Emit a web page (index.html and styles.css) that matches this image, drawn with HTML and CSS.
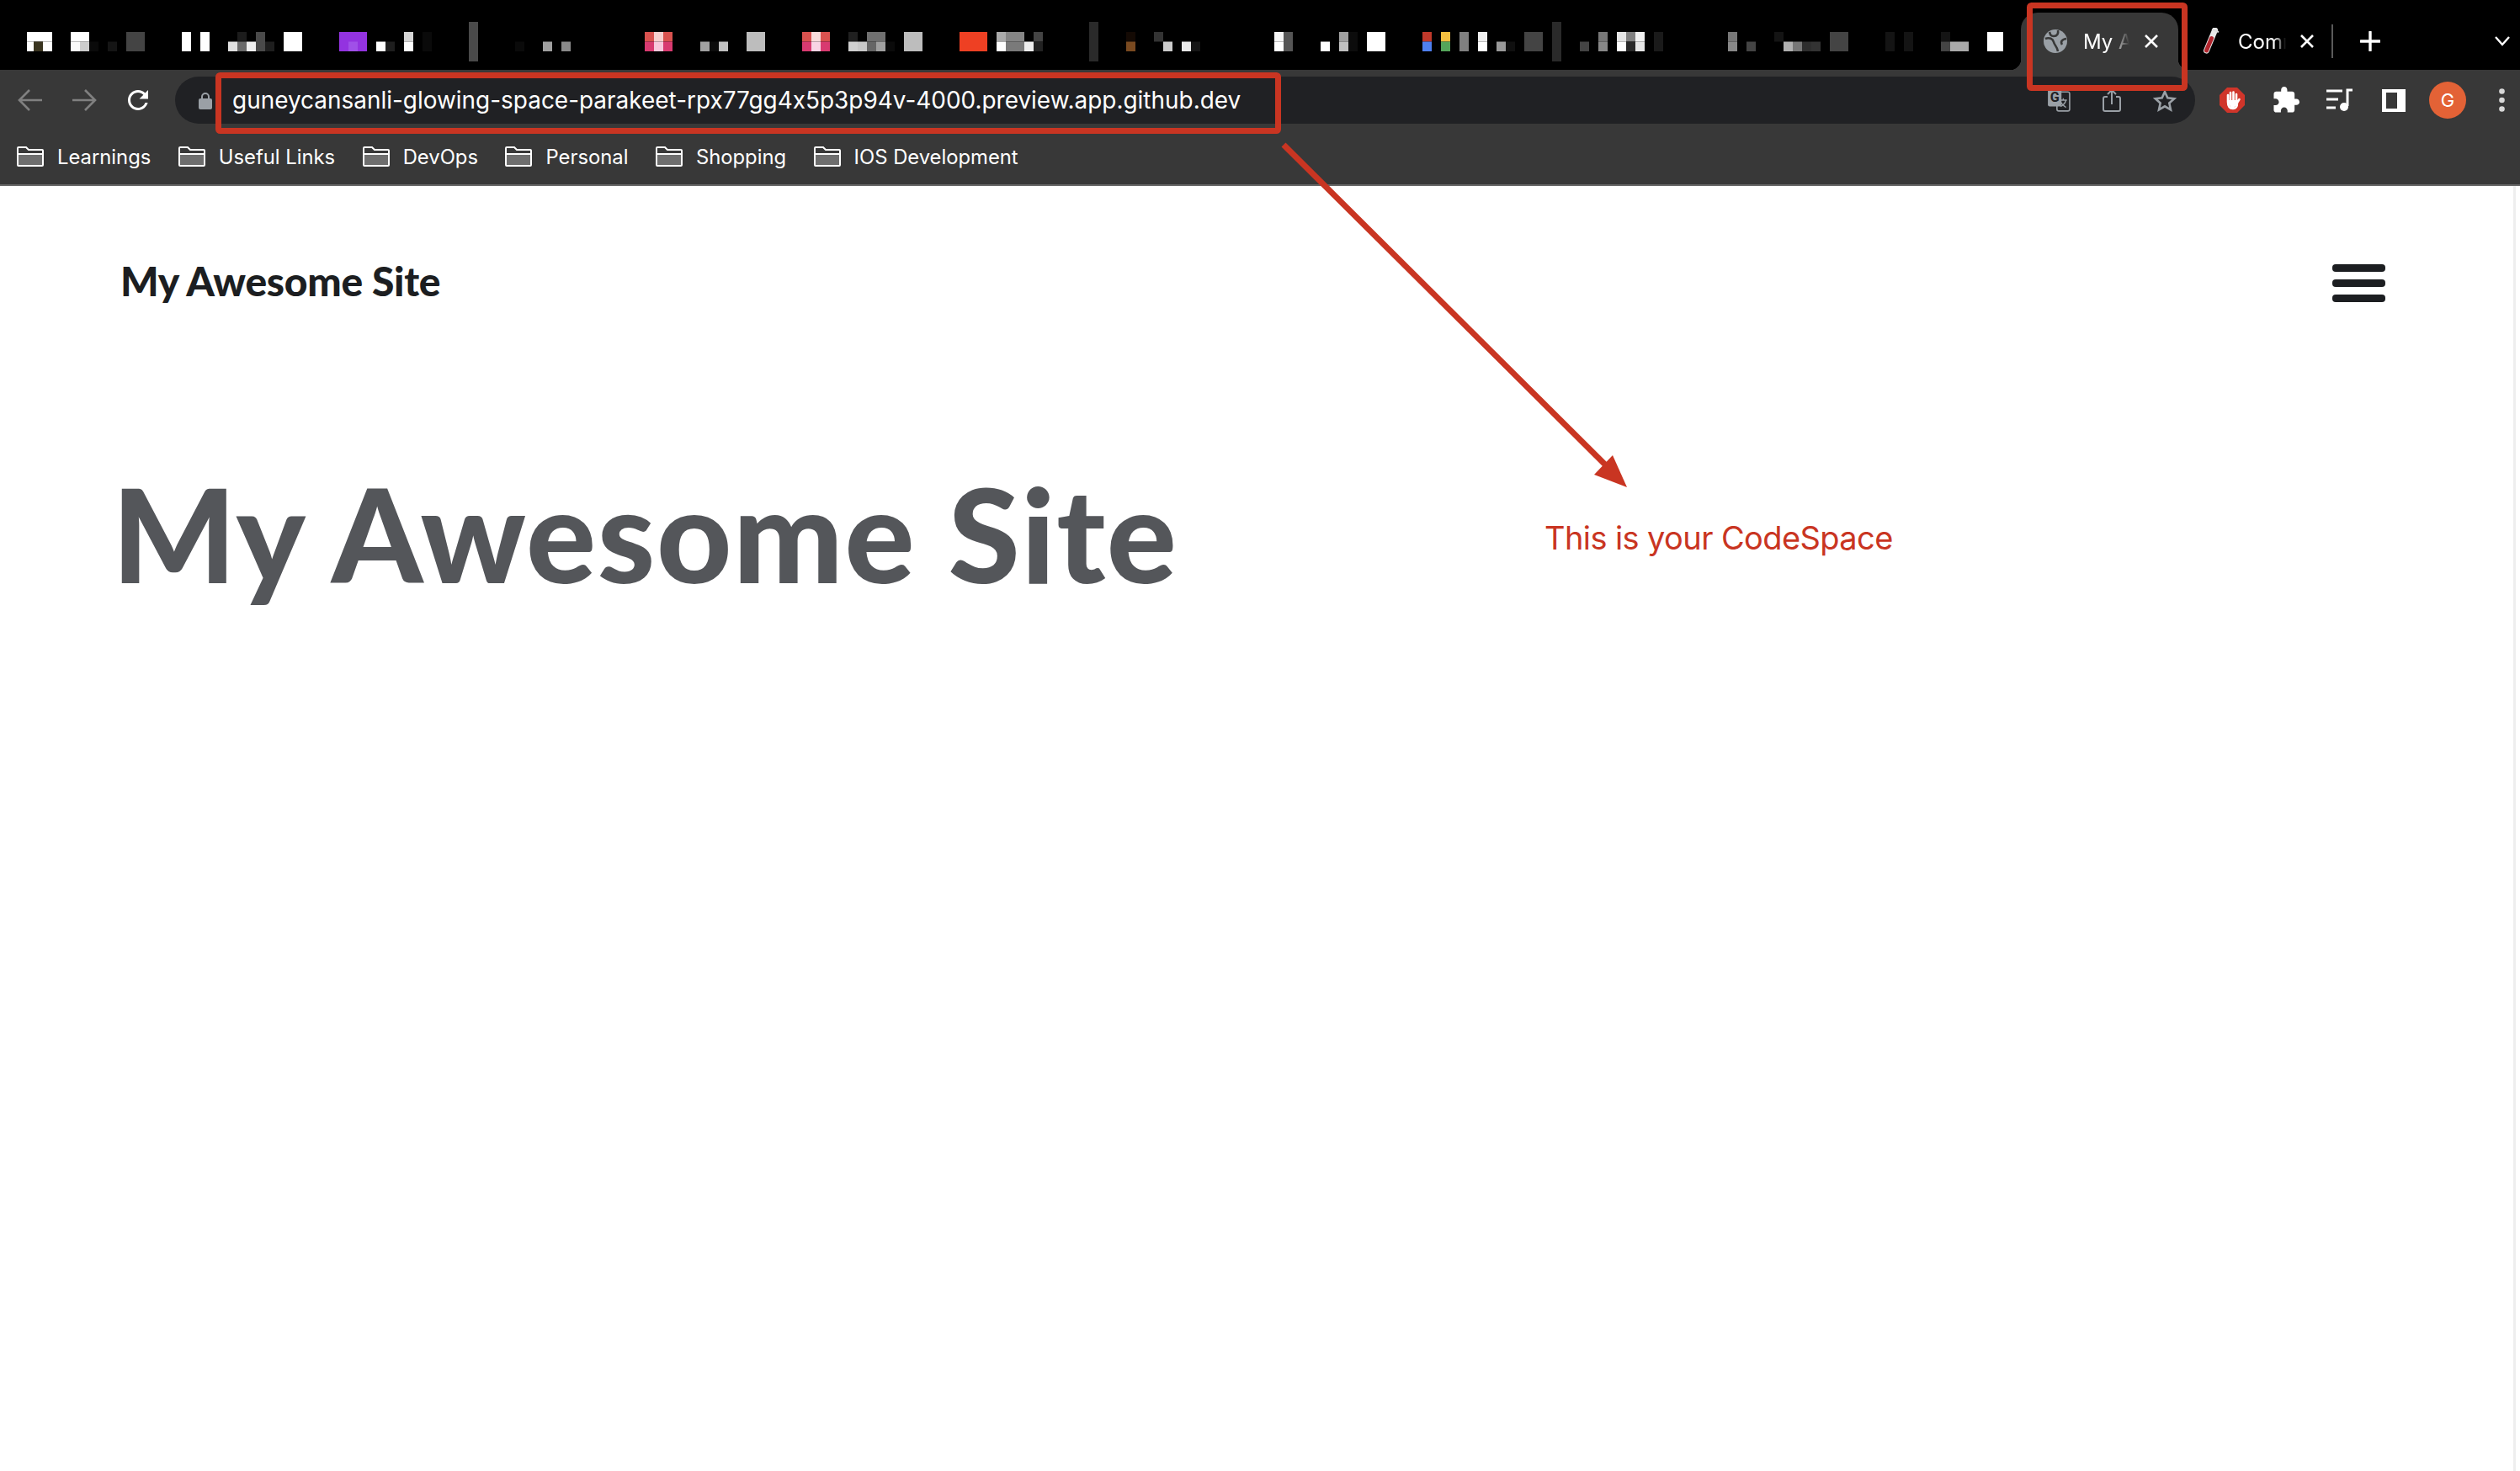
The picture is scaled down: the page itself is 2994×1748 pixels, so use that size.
FILE: index.html
```html
<!DOCTYPE html>
<html lang="en">
<head>
    <meta charset="UTF-8">
    <title>My Awesome Site</title>
    <link rel="stylesheet" href="styles.css">
</head>
<body>
<div class="browser">
    <!-- tab strip, the tabs on the left are pixelated -->
    <div class="tabstrip">
        <svg class="mosaic" width="2401" height="83" viewBox="0 0 2401 83">
            <rect class="top" x="32" width="30" fill="#fff"/><rect class="bot" x="32" width="8" fill="#fff"/><rect class="bot" x="40" width="11" fill="#3a3520"/><rect class="bot" x="51" width="11" fill="#fff"/>
            <rect class="top" x="84" width="22" fill="#fff"/><rect class="bot" x="84" width="11" fill="#fafafa"/><rect class="bot" x="95" width="11" fill="#ccc"/><rect class="bot" x="106" width="11" fill="#0a0a0a"/><rect class="bot" x="128" width="11" fill="#151515"/><rect class="full" x="150" width="22" fill="#444"/>
            <rect class="full" x="216" width="11" fill="#fff"/><rect class="full" x="238" width="11" fill="#fff"/><rect class="bot" x="271" width="11" fill="#e0e0e0"/><rect class="top" x="282" width="11" fill="#1c1c1c"/><rect class="bot" x="282" width="11" fill="#6a6a6a"/><rect class="bot" x="293" width="11" fill="#f0f0f0"/><rect class="full" x="304" width="11" fill="#4a4a4a"/><rect class="bot" x="315" width="11" fill="#1e1e1e"/><rect class="full" x="337" width="22" fill="#fff"/>
            <rect class="full" x="403" width="33" fill="#9333e0"/><rect class="bot" x="414" width="11" fill="#a050e8"/><rect class="bot" x="447" width="11" fill="#fff"/><rect class="bot" x="458" width="11" fill="#1e1e1e"/><rect class="top" x="480" width="11" fill="#d5d5d5"/><rect class="bot" x="480" width="11" fill="#fff"/><rect class="full" x="502" width="11" fill="#0a0a0a"/>
            <rect class="sep" x="557" width="11" fill="#4a4a4a"/>
            <rect class="bot" x="612" width="11" fill="#0a0a0a"/><rect class="bot" x="645" width="11" fill="#a0a0a0"/><rect class="bot" x="667" width="11" fill="#8a8a8a"/>
            <rect class="top" x="766" width="11" fill="#d9524f"/><rect class="top" x="777" width="11" fill="#f8d0d0"/><rect class="top" x="788" width="11" fill="#d9524f"/><rect class="bot" x="766" width="11" fill="#d83a70"/><rect class="bot" x="777" width="11" fill="#f8c8dc"/><rect class="bot" x="788" width="11" fill="#d83a70"/>
            <rect class="bot" x="832" width="11" fill="#a0a0a0"/><rect class="bot" x="843" width="11" fill="#0c0c0c"/><rect class="bot" x="854" width="11" fill="#c0c0c0"/><rect class="full" x="887" width="22" fill="#bdbdbd"/>
            <rect class="top" x="953" width="11" fill="#d9524f"/><rect class="top" x="964" width="11" fill="#f8dcdc"/><rect class="top" x="975" width="11" fill="#d9524f"/><rect class="bot" x="953" width="11" fill="#d83a70"/><rect class="bot" x="964" width="11" fill="#f8d4e4"/><rect class="bot" x="975" width="11" fill="#d83a70"/>
            <rect class="top" x="1008" width="11" fill="#202020"/><rect class="bot" x="1008" width="11" fill="#d0d0d0"/><rect class="bot" x="1019" width="11" fill="#c8c8c8"/><rect class="top" x="1030" width="22" fill="#707070"/><rect class="bot" x="1030" width="11" fill="#666"/><rect class="bot" x="1041" width="11" fill="#a0a0a0"/><rect class="bot" x="1052" width="11" fill="#0a0a0a"/><rect class="full" x="1074" width="22" fill="#bdbdbd"/>
            <rect class="full" x="1140" width="33" fill="#ee4023"/><rect class="top" x="1184" width="11" fill="#aaa"/><rect class="bot" x="1184" width="11" fill="#fff"/><rect class="top" x="1195" width="22" fill="#858585"/><rect class="bot" x="1195" width="22" fill="#7a7a7a"/><rect class="bot" x="1217" width="11" fill="#eee"/><rect class="top" x="1228" width="11" fill="#444"/><rect class="bot" x="1228" width="11" fill="#222"/>
            <rect class="sep" x="1294" width="11" fill="#2a2a2a"/>
            <rect class="top" x="1338" width="11" fill="#140a04"/><rect class="bot" x="1338" width="11" fill="#7a4a20"/><rect class="top" x="1371" width="11" fill="#333"/><rect class="bot" x="1382" width="11" fill="#ccc"/><rect class="bot" x="1404" width="11" fill="#e8e8e8"/><rect class="bot" x="1415" width="11" fill="#151515"/>
            <rect class="top" x="1514" width="11" fill="#f5f5f5"/><rect class="bot" x="1514" width="11" fill="#fff"/><rect class="full" x="1525" width="11" fill="#555"/><rect class="bot" x="1569" width="11" fill="#fff"/><rect class="top" x="1591" width="11" fill="#a0a0a0"/><rect class="bot" x="1591" width="11" fill="#c0c0c0"/><rect class="full" x="1602" width="11" fill="#0c0c0c"/><rect class="full" x="1624" width="22" fill="#fff"/>
            <rect class="top" x="1690" width="11" fill="#c0392b"/><rect class="bot" x="1690" width="11" fill="#4f80f0"/><rect class="top" x="1712" width="11" fill="#f5c040"/><rect class="bot" x="1712" width="11" fill="#55a55a"/><rect class="full" x="1734" width="11" fill="#808080"/><rect class="top" x="1756" width="11" fill="#eee"/><rect class="bot" x="1756" width="11" fill="#fff"/><rect class="bot" x="1778" width="11" fill="#999"/><rect class="bot" x="1789" width="11" fill="#0f0f0f"/><rect class="full" x="1811" width="22" fill="#444"/>
            <rect class="sep" x="1844" width="11" fill="#2a2a2a"/>
            <rect class="bot" x="1877" width="11" fill="#444"/><rect class="top" x="1899" width="11" fill="#777"/><rect class="bot" x="1899" width="11" fill="#888"/><rect class="top" x="1921" width="11" fill="#e5e5e5"/><rect class="bot" x="1921" width="11" fill="#fff"/><rect class="top" x="1932" width="11" fill="#808080"/><rect class="bot" x="1932" width="11" fill="#282828"/><rect class="top" x="1943" width="11" fill="#f0f0f0"/><rect class="bot" x="1943" width="11" fill="#e5e5e5"/><rect class="full" x="1965" width="11" fill="#1a1a1a"/>
            <rect class="top" x="2053" width="11" fill="#777"/><rect class="bot" x="2053" width="11" fill="#888"/><rect class="bot" x="2075" width="11" fill="#444"/><rect class="top" x="2108" width="11" fill="#141414"/><rect class="bot" x="2119" width="11" fill="#b0b0b0"/><rect class="bot" x="2130" width="11" fill="#777"/><rect class="bot" x="2141" width="11" fill="#2e2e2e"/><rect class="bot" x="2152" width="11" fill="#333"/><rect class="full" x="2174" width="22" fill="#444"/>
            <rect class="full" x="2240" width="11" fill="#141414"/><rect class="full" x="2262" width="11" fill="#141414"/><rect class="top" x="2306" width="11" fill="#141414"/><rect class="bot" x="2306" width="11" fill="#444"/><rect class="bot" x="2317" width="22" fill="#aaa"/><rect class="full" x="2361" width="19" fill="#fff"/>
        </svg>
        <div class="tab active">
            <svg class="tab-icon" width="28" height="28" viewBox="0 0 28 28">
                <circle cx="14" cy="14" r="14" fill="#9aa0a6"/>
                <path d="M2 11c5-2 9 0 10 4s4 5 5 11M17 1c1 4-1 7-5 7S8 6 7 3M22 18c-2-3-1-6 5-7" fill="none" stroke="#383838" stroke-width="2.600"/>
            </svg>
            <span class="tab-title">My Awesome Site</span>
            <svg class="tab-close" width="20" height="20" viewBox="0 0 20 20"><path d="M3 3l14 14M17 3L3 17" stroke="#fff" stroke-width="2.6"/></svg>
        </div>
        <div class="tab second">
            <svg class="tab-icon tube" width="20" height="32" viewBox="0 0 20 32">
                <path d="M14.500 3L4.500 27" stroke="#e8e8e8" stroke-width="7" stroke-linecap="round"/>
                <path d="M10.500 12.500L4.500 27" stroke="#b3262e" stroke-width="5" stroke-linecap="round"/>
                <path d="M11 2l8 3" stroke="#ddd" stroke-width="2"/>
            </svg>
            <span class="tab-title short">Community</span>
            <svg class="tab-close" width="20" height="20" viewBox="0 0 20 20"><path d="M3 3l14 14M17 3L3 17" stroke="#fff" stroke-width="2.6"/></svg>
        </div>
        <div class="tab-sep"></div>
        <svg class="new-tab" width="24" height="24" viewBox="0 0 24 24"><path d="M12 1v22M1 12h22" stroke="#fff" stroke-width="3.4" stroke-linecap="round"/></svg>
        <svg class="tab-list" width="22" height="14" viewBox="0 0 22 14"><path d="M3 2l8 9 8-9" fill="none" stroke="#fff" stroke-width="2.400"/></svg>
    </div>

    <div class="toolbar">
        <div class="nav-btn">
            <svg width="32" height="32" viewBox="0 0 32 32"><path d="M30 16H3M15 4L3 16l12 12" fill="none" stroke="#808080" stroke-width="2.600"/></svg>
        </div>
        <div class="nav-btn">
            <svg width="32" height="32" viewBox="0 0 32 32"><path d="M2 16h27M17 4l12 12-12 12" fill="none" stroke="#808080" stroke-width="2.600"/></svg>
        </div>
        <div class="nav-btn">
            <svg width="36" height="36" viewBox="0 0 24 24"><path fill="#fff" d="M17.650 6.350C16.200 4.900 14.210 4 12 4c-4.420 0-7.990 3.580-7.990 8s3.570 8 7.990 8c3.730 0 6.840-2.550 7.730-6h-2.080c-.82 2.330-3.040 4-5.650 4-3.310 0-6-2.690-6-6s2.690-6 6-6c1.660 0 3.140.69 4.220 1.780L13 11h7V4l-2.350 2.350z"/></svg>
        </div>
        <div class="omnibox">
            <svg class="lock" width="16" height="21" viewBox="0 0 16 21"><path d="M4 9V6a4 4 0 0 1 8 0v3" fill="none" stroke="#9aa0a6" stroke-width="2"/><rect y="8" width="16" height="13" rx="2" fill="#9aa0a6"/></svg>
            <span class="url">guneycansanli-glowing-space-parakeet-rpx77gg4x5p3p94v-4000.preview.app.github.dev</span>
            <div class="omni-actions">
                <svg width="28" height="28" viewBox="0 0 26 26">
                    <rect x="11" y="4" width="14" height="21" rx="2" fill="none" stroke="#9aa0a6" stroke-width="1.500"/>
                    <rect x="1" y="1" width="15" height="19" rx="2" fill="#9aa0a6"/>
                    <text class="g-mark" x="8.500" y="15">G</text>
                    <path d="M14 13h8M18 11v2M21 13c-1 4-4 6-6 7M15 15c1 2 4 5 6 6" fill="none" stroke="#9aa0a6" stroke-width="1.300"/>
                </svg>
                <svg width="22" height="28" viewBox="0 0 22 28"><path d="M6 10H3a2 2 0 0 0-2 2v13a2 2 0 0 0 2 2h16a2 2 0 0 0 2-2V12a2 2 0 0 0-2-2h-3M11 19V2M6 7l5-5 5 5" fill="none" stroke="#9aa0a6" stroke-width="2"/></svg>
                <svg width="28" height="27" viewBox="0 0 28 27"><path d="M14 3l3.300 7.300 7.900.9-5.900 5.300 1.700 7.800L14 20.300 7 24.300l1.700-7.800-5.900-5.300 7.900-.9z" fill="none" stroke="#9aa0a6" stroke-width="2.600"/></svg>
            </div>
        </div>
        <div class="tool-btn">
            <svg width="32" height="32" viewBox="0 0 32 32">
                <path d="M10 1h12l9 9v12l-9 9H10l-9-9V10z" fill="#d0352a"/>
                <path d="M11 18v-8M14 17V7M17.500 17V6.500M21 18V9M11 18c0 5 2 8 6 8s5-3 5-7l2.500-4" fill="none" stroke="#fff" stroke-width="2.600" stroke-linecap="round"/>
                <path d="M12 16h9v6l-3 3h-3l-3-4z" fill="#fff"/>
            </svg>
        </div>
        <div class="tool-btn">
            <svg width="32" height="32" viewBox="1 1 22 22"><path fill="#fff" d="M20.500 11H19V7c0-1.100-.9-2-2-2h-4V3.500C13 2.120 11.880 1 10.500 1S8 2.120 8 3.500V5H4c-1.100 0-1.990.9-1.990 2v3.800H3.500c1.490 0 2.700 1.210 2.700 2.700s-1.210 2.700-2.700 2.700H2V20c0 1.100.9 2 2 2h3.800v-1.500c0-1.490 1.210-2.700 2.700-2.700 1.490 0 2.700 1.210 2.700 2.700V22H17c1.100 0 2-.9 2-2v-4h1.500c1.380 0 2.500-1.120 2.500-2.500S21.880 11 20.500 11z"/></svg>
        </div>
        <div class="tool-btn">
            <svg width="32" height="28" viewBox="0 0 32 28">
                <path d="M0 3h19M0 13h14M0 23h11" stroke="#fff" stroke-width="3"/>
                <path d="M25 21V2h6" fill="none" stroke="#fff" stroke-width="3"/>
                <circle cx="21" cy="22" r="5" fill="#fff"/>
            </svg>
        </div>
        <div class="tool-btn"><div class="side-panel"></div></div>
        <div class="tool-btn"><div class="avatar">G</div></div>
        <div class="tool-btn last">
            <svg width="7" height="28" viewBox="0 0 7 28" fill="#d8d8d8"><circle cx="3.500" cy="3.500" r="3.300"/><circle cx="3.500" cy="14" r="3.300"/><circle cx="3.500" cy="24.500" r="3.300"/></svg>
        </div>
    </div>

    <div class="bookmarks">
        <div class="bookmark"><svg class="folder" width="32" height="24" viewBox="0 0 32 24"><use href="#folder-shape"/></svg><span>Learnings</span></div>
        <div class="bookmark"><svg class="folder" width="32" height="24" viewBox="0 0 32 24"><use href="#folder-shape"/></svg><span>Useful Links</span></div>
        <div class="bookmark"><svg class="folder" width="32" height="24" viewBox="0 0 32 24"><use href="#folder-shape"/></svg><span>DevOps</span></div>
        <div class="bookmark"><svg class="folder" width="32" height="24" viewBox="0 0 32 24"><use href="#folder-shape"/></svg><span>Personal</span></div>
        <div class="bookmark"><svg class="folder" width="32" height="24" viewBox="0 0 32 24"><use href="#folder-shape"/></svg><span>Shopping</span></div>
        <div class="bookmark"><svg class="folder" width="32" height="24" viewBox="0 0 32 24"><use href="#folder-shape"/></svg><span>IOS Development</span></div>
    </div>

    <div class="page">
        <div class="page-main">
            <nav class="site-nav">
                <a class="site-title">My Awesome Site</a>
                <div class="hamburger"><span></span><span></span><span></span></div>
            </nav>
            <h1 class="hero-title">My Awesome Site</h1>
        </div>
        <div class="scrollbar"></div>
    </div>
</div>

<!-- red annotations drawn on top of the screenshot -->
<svg class="marks" width="2994" height="1748" viewBox="0 0 2994 1748">
    <defs>
        <g id="folder-shape">
            <path d="M1 9h30v13a1 1 0 0 1-1 1H2a1 1 0 0 1-1-1z" fill="#6e6e6e"/>
            <path d="M1 9V2a1 1 0 0 1 1-1h9l3 3h16a1 1 0 0 1 1 1v17a1 1 0 0 1-1 1H2a1 1 0 0 1-1-1V9h30" fill="none" stroke="#fff" stroke-width="2"/>
        </g>
    </defs>
    <rect class="mark-box" x="259.500" y="89.500" width="1259" height="66" rx="2"/>
    <rect class="mark-box" x="2411.500" y="6.500" width="184" height="98" rx="2"/>
    <path class="mark-line" d="M1525 172L1908 553"/>
    <path class="mark-fill" d="M1933 579L1894 564L1916 541z"/>
</svg>
<div class="mark-note">This is your CodeSpace</div>
</body>
</html>
```

FILE: styles.css
```css
html, body {
    margin: 0;
    padding: 0;
    background: #fff;
}

body {
    position: relative;
    font-family: "Inter", "Liberation Sans", sans-serif;
    font-feature-settings: "calt" 0;
    overflow: hidden;
}

.browser {
    display: flex;
    flex-direction: column;
    min-height: 100vh;
}

/* tab strip */
.tabstrip {
    display: flex;
    height: 83px;
    background: #000;
    align-items: center;
}

.mosaic {
    flex: none;
    display: block;
}

.mosaic .top { y: 38px; height: 11.5px; }
.mosaic .bot { y: 49.5px; height: 11.5px; }
.mosaic .full { y: 38px; height: 23px; }
.mosaic .sep { y: 26px; height: 47px; }

.tab {
    position: relative;
    display: flex;
    align-items: center;
    align-self: stretch;
    margin-top: 15px;
    color: #fff;
    font-size: 24px;
}

.tab.active {
    width: 160px;
    padding-left: 27px;
    background: #383838;
    border-radius: 20px 20px 0 0;
}

.tab.active::before,
.tab.active::after {
    content: "";
    position: absolute;
    bottom: 0;
    width: 13px;
    height: 13px;
}

.tab.active::before {
    left: -13px;
    background: radial-gradient(circle at 0 0, #000 13px, #383838 13.5px);
}

.tab.active::after {
    right: -13px;
    background: radial-gradient(circle at 100% 0, #000 13px, #383838 13.5px);
}

.tab.second {
    padding-left: 29px;
}

.tab-icon {
    flex: none;
}

.tab-title {
    width: 55px;
    margin-left: 19px;
    overflow: hidden;
    white-space: nowrap;
    -webkit-mask-image: linear-gradient(to right, #000 60%, transparent 100%);
    mask-image: linear-gradient(to right, #000 60%, transparent 100%);
}

.tab-title.short {
    width: 57px;
    margin-left: 22px;
    -webkit-mask-image: linear-gradient(to right, #000 75%, transparent 100%);
    mask-image: linear-gradient(to right, #000 75%, transparent 100%);
}

.tab-close {
    flex: none;
    margin-left: 16px;
}

.tab.second .tab-close {
    margin-left: 15px;
}

.tab-sep {
    width: 2px;
    height: 40px;
    margin: 15px 0 0 19px;
    background: #5a5a5a;
}

.new-tab {
    margin: 15px 0 0 32px;
}

.tab-list {
    margin: 15px 10px 0 auto;
}

/* toolbar */
.toolbar {
    display: flex;
    align-items: flex-start;
    height: 72px;
    padding: 8px 0 0 4px;
    box-sizing: border-box;
    background: #383838;
}

.nav-btn, .tool-btn {
    flex: none;
    display: flex;
    align-items: center;
    justify-content: center;
    width: 64px;
    height: 56px;
}

.tool-btn.last {
    width: 54px;
    justify-content: flex-start;
    padding-left: 29px;
    box-sizing: border-box;
}

.omnibox {
    flex: none;
    display: flex;
    align-items: center;
    width: 2400px;
    height: 56px;
    margin: 0 12px 0 12px;
    padding-left: 28px;
    box-sizing: border-box;
    background: #202124;
    border-radius: 28px;
}

.lock {
    flex: none;
}

.url {
    margin-left: 24px;
    color: #fff;
    font-size: 27.95px;
    white-space: nowrap;
}

.omni-actions {
    display: flex;
    align-items: center;
    gap: 38px;
    margin-left: auto;
    margin-right: 22px;
}

.g-mark {
    font-family: "Roboto", sans-serif;
    font-size: 15px;
    font-weight: 700;
    fill: #202124;
    text-anchor: middle;
}

.side-panel {
    width: 28px;
    height: 27px;
    box-sizing: border-box;
    border: solid #fff;
    border-width: 4px 10px 4px 5px;
    background: #383838;
}

.avatar {
    width: 44px;
    height: 44px;
    border-radius: 50%;
    background: #e36236;
    color: #fff;
    font-size: 22px;
    line-height: 44px;
    text-align: center;
}

/* bookmarks */
.bookmarks {
    display: flex;
    align-items: center;
    gap: 32.5px;
    height: 66px;
    padding: 0 0 2px 20px;
    box-sizing: border-box;
    background: #383838;
    border-bottom: 2px solid #666;
}

.bookmark {
    display: flex;
    align-items: center;
    gap: 16px;
    color: #fff;
    font-size: 23.8px;
}

/* page */
.page {
    flex: 1;
    display: flex;
}

.page-main {
    flex: 1;
    padding: 0 152px 0 143px;
}

.scrollbar {
    width: 8px;
    border-left: 3px solid #eee;
    box-sizing: border-box;
}

.site-nav {
    display: flex;
    align-items: center;
    justify-content: space-between;
    height: 231px;
}

.site-title {
    margin-bottom: 6px;
    font-family: "Lato", sans-serif;
    font-size: 48px;
    font-weight: 900;
    letter-spacing: -0.3px;
    color: #1c1e21;
}

.hamburger {
    display: flex;
    flex-direction: column;
    gap: 9px;
    width: 63px;
}

.hamburger span {
    height: 9px;
    border-radius: 4px;
    background: #1c1e21;
}

.hero-title {
    margin: 85px 0 0 -10px;
    font-family: "Lato", sans-serif;
    font-size: 155px;
    font-weight: 900;
    letter-spacing: 1.6px;
    line-height: 1.25;
    color: #54565a;
}

/* annotations */
.marks {
    position: absolute;
    top: 0;
    left: 0;
    pointer-events: none;
}

.mark-box {
    fill: none;
    stroke: #c93522;
    stroke-width: 7;
}

.mark-line {
    stroke: #c93522;
    stroke-width: 7;
}

.mark-fill {
    fill: #c93522;
}

.mark-note {
    position: absolute;
    left: 1835px;
    top: 616px;
    color: #c93522;
    font-size: 38px;
    letter-spacing: -0.6px;
    white-space: nowrap;
}
```
